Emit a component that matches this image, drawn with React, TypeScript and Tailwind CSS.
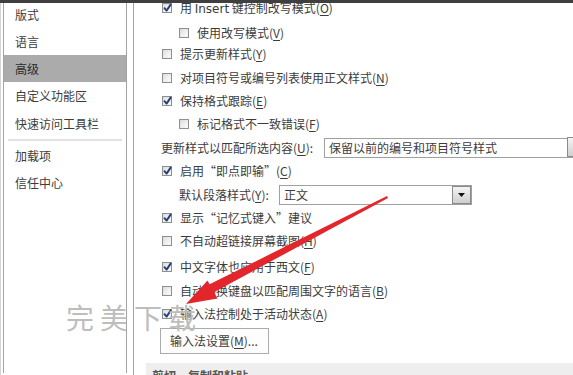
import React from "react";

const FONT = { fontFamily: '"Noto Sans CJK SC", "Noto Sans", sans-serif' };

function Check({ checked }: { checked?: boolean }) {
  return (
    <div className="relative w-[10px] h-[10px] shrink-0 border border-[#8e8f8f] bg-gradient-to-br from-[#dcdcdc] to-[#f8f8f8]">
      <div className="absolute inset-[1px] bg-gradient-to-br from-[#e2e2e2] to-[#fbfbfb]" />
      {checked && (
        <svg className="absolute left-[0px] top-[-1px]" width="9" height="10" viewBox="0 0 9 10">
          <path d="M1.5 5.2 L3.6 7.6 L7.6 1.6" fill="none" stroke="#24407a" strokeWidth="1.9" strokeLinejoin="round" strokeLinecap="round" />
        </svg>
      )}
    </div>
  );
}

function Label({ text, k, tail }: { text: string; k: string; tail?: string }) {
  return (
    <span className="whitespace-nowrap">
      {text}(<span className="underline underline-offset-2">{k}</span>){tail}
    </span>
  );
}

function Row({
  mt,
  checked,
  indent,
  children,
}: {
  mt: string;
  checked?: boolean;
  indent?: boolean;
  children: React.ReactNode;
}) {
  return (
    <div className={`flex items-center h-[20px] ${mt} ${indent ? "pl-[17px]" : ""}`}>
      <Check checked={checked} />
      <div className="ml-[8px]">{children}</div>
    </div>
  );
}

export default function App() {
  const sideItems = ["版式", "语言", "高级", "自定义功能区", "快速访问工具栏"];
  return (
    <div
      className="relative w-[573px] h-[375px] overflow-hidden bg-white text-[12px] text-[#3c3c3c] leading-none"
      style={FONT}
    >
      <div className="relative z-10 h-[3px] bg-[#3f3f3f]" />
      <div className="flex h-[372px]">
        {/* sidebar */}
        <div className="pl-[2px] h-full border-l border-[#d4d4d4] ml-0">
          <div className="w-[124px] h-full border-l border-r border-[#a4a4a4] flex flex-col mt-[-2px]">
            {sideItems.map((s, i) => (
              <div
                key={s}
                className={`flex items-center h-[27px] pl-[11px] ${i === 3 ? "h-[28px]" : ""} ${
                  i === 2 ? "bg-[#ababab] text-[#2a2a2a]" : ""
                }`}
              >
                {s}
              </div>
            ))}
            <div className="mx-[4px] mt-[2px] h-[2px] bg-[#e2e2e2]" />
            <div className="flex items-center h-[27px] pl-[11px] mt-[1px]">加载项</div>
            <div className="flex items-center h-[27px] pl-[11px]">信任中心</div>
          </div>
        </div>
        {/* content */}
        <div className="ml-[6px] flex-1 h-full border-l border-[#a4a4a4] overflow-hidden">
          <div className="pl-[28px] flex flex-col">
            <Row mt="mt-[-5px]" checked>
              <span className="whitespace-nowrap">
                用 <span style={{ fontFamily: '"DejaVu Sans", sans-serif' }} className="text-[12px]">Insert</span> 键控制改写模式(
                <span className="underline underline-offset-2">O</span>)
              </span>
            </Row>
            <Row mt="mt-[5px]" indent>
              <Label text="使用改写模式" k="V" />
            </Row>
            <Row mt="mt-[1px]">
              <Label text="提示更新样式" k="Y" />
            </Row>
            <Row mt="mt-[4px]">
              <Label text="对项目符号或编号列表使用正文样式" k="N" />
            </Row>
            <Row mt="mt-[3px]" checked>
              <Label text="保持格式跟踪" k="E" />
            </Row>
            <Row mt="mt-[3px]" indent>
              <Label text="标记格式不一致错误" k="F" />
            </Row>
            <div className="flex items-center h-[20px] mt-[4px] ml-[-1px]">
              <div className="w-[163px] shrink-0 whitespace-nowrap">
                <Label text="更新样式以匹配所选内容" k="U" tail=":" />
              </div>
              <div className="flex items-center h-[20px] w-[260px] border border-[#a0a0a0] bg-white pl-[4px] shrink-0">
                <span className="flex-1 whitespace-nowrap">保留以前的编号和项目符号样式</span>
              </div>
            </div>
            <Row mt="mt-[3px]" checked>
              <Label text="启用“即点即输”" k="C" />
            </Row>
            <div className="flex items-center h-[20px] mt-[4px] pl-[17px]">
              <div className="w-[100px] shrink-0 whitespace-nowrap">
                <Label text="默认段落样式" k="Y" tail=":" />
              </div>
              <div className="flex items-center h-[20px] w-[193px] border border-[#a0a0a0] bg-white pl-[4px] shrink-0">
                <span className="flex-1">正文</span>
                <div className="flex items-center justify-center w-[19px] h-[18px] border border-[#8a8a8a] bg-gradient-to-b from-[#f4f4f4] to-[#cfcfcf]">
                  <svg width="7" height="4" viewBox="0 0 7 4">
                    <path d="M0 0 H7 L3.5 4 Z" fill="#111" />
                  </svg>
                </div>
              </div>
            </div>
            <Row mt="mt-[3px]" checked>
              <span className="whitespace-nowrap">显示“记忆式键入”建议</span>
            </Row>
            <Row mt="mt-[3px]">
              <Label text="不自动超链接屏幕截图" k="H" />
            </Row>
            <Row mt="mt-[6px]" checked>
              <Label text="中文字体也应用于西文" k="F" />
            </Row>
            <Row mt="mt-[4px]">
              <Label text="自动切换键盘以匹配周围文字的语言" k="B" />
            </Row>
            <Row mt="mt-[3px]" checked>
              <Label text="输入法控制处于活动状态" k="A" />
            </Row>
            <div className="mt-[4px] ml-[-2px] flex items-center w-[109px] h-[26px] border border-[#ababab] bg-[#fdfdfd] pl-[9px]">
              <span className="whitespace-nowrap">
                输入法设置(<span className="underline underline-offset-2">M</span>)...
              </span>
            </div>
            <div className="mt-[9px] ml-[-16px] h-[40px] bg-[#eeeeee] pl-[6px] pt-[7px] font-bold text-[#555]">
              剪切、复制和粘贴
            </div>
          </div>
        </div>
      </div>

      {/* the select box's right button, partly off the page */}
      <div className="absolute left-[567px] top-[137px] w-[18px] h-[20px] border border-[#8a8a8a] bg-gradient-to-b from-[#f4f4f4] to-[#cfcfcf]" />

      {/* watermark */}
      <div className="absolute left-[66px] top-[303px] text-[28px] tracking-[6px] text-[#bdbdbd] whitespace-nowrap leading-none">
        完美下载
      </div>

      {/* red arrow */}
      <svg className="absolute inset-0 pointer-events-none" width="573" height="375" viewBox="0 0 573 375">
        <polygon points="387,196 388,198 213.5,292.5 209,284.5" fill="#e2262b" />
        <polygon points="186,304 207.5,280.5 217.5,298.5" fill="#e2262b" />
      </svg>
    </div>
  );
}
